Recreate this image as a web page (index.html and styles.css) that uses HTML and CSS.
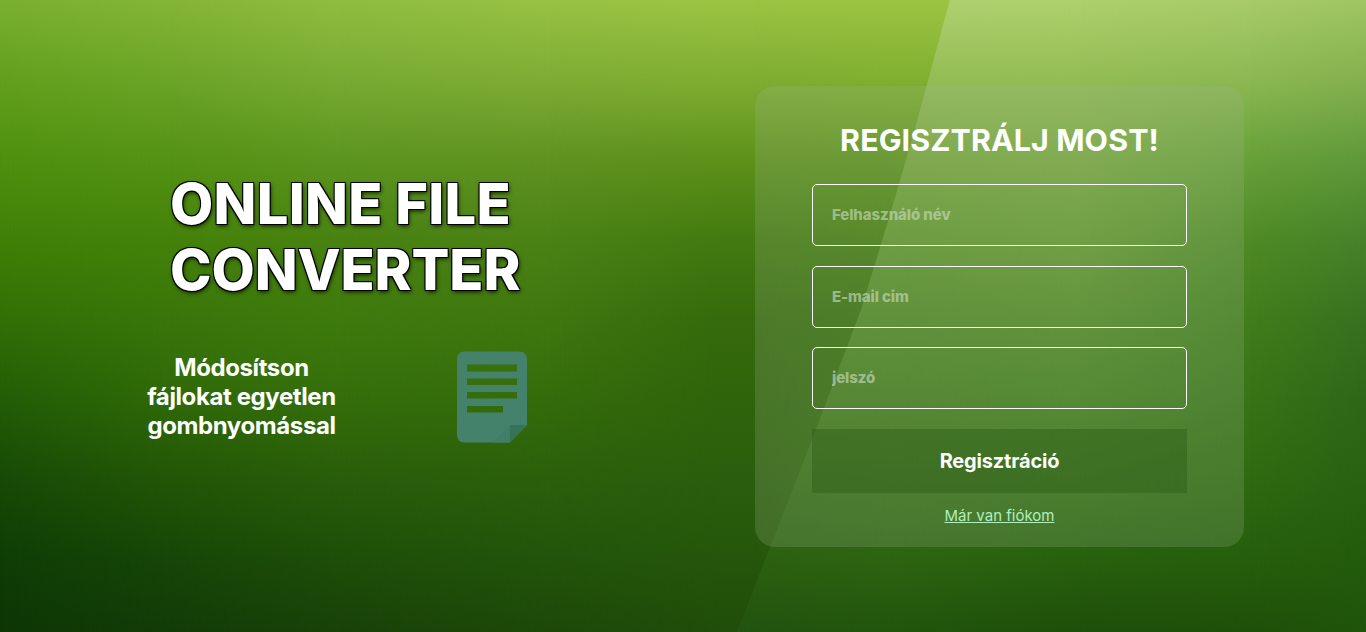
FILE: index.html
```
<!DOCTYPE html>
<html lang="hu">
<head>
<meta charset="utf-8">
<title>Online File Converter</title>
<link rel="stylesheet" href="styles.css">
</head>
<body>
<div class="backdrop" aria-hidden="true">
  <div class="shade shade-a"></div>
  <div class="shade shade-b"></div>
  <div class="shade shade-c"></div>
  <div class="shade shade-d"></div>
  <div class="shade shade-e"></div>
  <div class="beam">
    <div class="shade beam-a"></div>
    <div class="shade beam-b"></div>
    <div class="shade beam-c"></div>
    <div class="shade beam-d"></div>
    <div class="shade beam-e"></div>
  </div>
</div>
<main class="page">
  <section class="intro">
    <h1 class="title"><span class="title-top">ONLINE FILE</span><br>CONVERTER</h1>
    <div class="pitch">
      <p class="slogan">Módosítson<br>fájlokat egyetlen<br>gombnyomással</p>
      <svg class="doc" viewBox="0 0 70 92" width="70" height="92">
        <path fill="#44826c" fill-rule="evenodd" d="M8 .5H62Q70 .5 70 8.500V74L53 91.500H8Q0 91.500 0 83.500V8.500Q0 .5 8 .5ZM10 13.500V20.500H60V13.500ZM10 27.500V34H60V27.500ZM10 41V47.500H60V41ZM10 55V61.500H46V55Z"/>
        <path fill="#417e68" d="M53 74V91.500H36Z"/>
        <path fill="#36735b" d="M53 74H70L53 91.500Z"/>
      </svg>
    </div>
  </section>
  <form class="card">
    <h2 class="card-title">REGISZTRÁLJ MOST!</h2>
    <input class="field" type="text" placeholder="Felhasználó név">
    <input class="field" type="text" placeholder="E-mail cim">
    <input class="field" type="password" placeholder="jelszó">
    <button class="submit" type="button">Regisztráció</button>
    <a class="login" href="#">Már van fiókom</a>
  </form>
</main>
</body>
</html>
```
FILE: styles.css
```
* { box-sizing: border-box; }
body {
  margin: 0;
  height: 632px;
  overflow: hidden;
  background: #2d630b;
  color: #fff;
  font-family: Inter, sans-serif;
}
.backdrop { position: absolute; inset: 0; z-index: -1;
  background: linear-gradient(#7ab02f, #62a01d 80px, #4f900f 160px, #408007 240px, #317006 320px, #235d06 400px, #174a06 480px, #0f3d05 560px, #0d3605 632px); }
.shade { position: absolute; inset: 0; }
/* Each shade fades in sideways over the one before it. */
.shade-a { background: linear-gradient(#84b536, #6ba427 80px, #549214 160px, #438209 240px, #39750a 320px, #2f6908 400px, #225606 480px, #174607 560px, #123c07 632px);
  mask-image: linear-gradient(90deg, transparent 0, #000 170px); }
.shade-b { background: linear-gradient(#8fbd40, #77aa32 80px, #5c951e 160px, #488211 240px, #3e7a0d 320px, #346e0b 400px, #295d0a 480px, #1e4e08 560px, #184208 632px);
  mask-image: linear-gradient(90deg, transparent 170px, #000 340px); }
.shade-c { background: linear-gradient(#98c243, #7dac34 80px, #5f9221 160px, #4b8216 240px, #3f770f 320px, #346c0b 400px, #2b600b 480px, #23540b 560px, #1d4908 632px);
  mask-image: linear-gradient(90deg, transparent 340px, #000 550px); }
.shade-d { background: linear-gradient(#9bc443, #7fad31 80px, #5d911a 160px, #437a10 240px, #366a0c 320px, #30640b 400px, #2b5e0c 480px, #25560b 560px, #204e0a 632px);
  mask-image: linear-gradient(90deg, transparent 550px, #000 720px); }
.shade-e { background: linear-gradient(#9cc443, #80af2f 80px, #5d921c 160px, #447c0c 240px, #37700b 320px, #30670a 632px);
  mask-image: linear-gradient(90deg, transparent 755px, #000 900px); }
.beam { position: absolute; inset: 0;
  clip-path: polygon(950px 0, 1366px 0, 1366px 632px, 737px 632px, 812px 440px, 861px 310px, 888px 222px, 912px 140px); }
.beam-a { background: linear-gradient(#b0d170, #5b9230 240px, #427b1a 400px, #356c14 480px, #2c6011 560px, #235310 632px); }
.beam-b { background: linear-gradient(#b0d170, #94bd54 80px, #77a63a 160px, #60962c 240px, #4f8722 320px, #437b1b 400px, #386f15 480px, #2d6411 560px, #21550c 632px);
  mask-image: linear-gradient(90deg, transparent 740px, #000 900px); }
.beam-c { background: linear-gradient(#aed06c, #93bc54 80px, #79a93f 160px, #64992f 240px, #518a24 320px, #427e19 400px, #357112 480px, #28600e 560px, #1e4f0a 632px);
  mask-image: linear-gradient(90deg, transparent 900px, #000 1080px); }
.beam-d { background: linear-gradient(#a7cb68, #8bb852 80px, #67a038 160px, #4f8a25 240px, #417d1b 320px, #377416 400px, #2f6a10 480px, #265e0c 560px, #1f500a 632px);
  mask-image: linear-gradient(90deg, transparent 1080px, #000 1250px); }
.beam-e { background: linear-gradient(#9fc563, #82b04d 80px, #5f983a 160px, #46822a 240px, #37711f 320px, #2f6718 400px, #296211 480px, #235b0c 560px, #1f540a 632px);
  mask-image: linear-gradient(90deg, transparent 1250px, #000 1366px); }
.page { display: grid; grid-template-columns: 755px 489px; height: 632px; }
.intro { padding: 170px 0 0 147px; }
.title {
  margin: 0 0 0 23px;
  font-size: 56px;
  line-height: 66px;
  font-weight: 800;
  padding-top: 1px;
  letter-spacing: -.1px;
  text-shadow: -1px -1px 0 #000, 1px -1px 0 #000, -1px 1px 0 #000, 1px 1px 0 #000, 1px 2px 4px rgba(0, 0, 0, .8);
}
.title-top { letter-spacing: .3px; }
.pitch { display: flex; gap: 121px; margin-top: 48px; }
.slogan { margin: 2px 0 0; width: 189px; white-space: nowrap; text-align: center; font-size: 24px; line-height: 29px; font-weight: 700; letter-spacing: -.4px; display: flex; justify-content: center; }
.doc { flex: none; }
.card {
  display: flex;
  flex-direction: column;
  align-items: center;
  height: 461px;
  margin-top: 86px;
  padding: 35px 57px 0;
  border-radius: 20px;
  background: rgba(160, 182, 150, .22);
}
.card-title { margin: 0 0 24px; font-size: 30.4px; line-height: 39px; font-weight: 730; letter-spacing: .1px; white-space: nowrap; }
.field {
  width: 375px;
  height: 62px;
  flex: none;
  margin-bottom: 19.6px;
  padding: 0 20px 1px 19px;
  border: 1px solid #fff;
  border-radius: 5px;
  background: transparent;
  color: #fff;
  font: 800 15px Inter, sans-serif;
  letter-spacing: -.1px;
}
.field::placeholder { color: rgba(200, 218, 190, .65); }
.submit {
  width: 375px;
  height: 64px;
  flex: none;
  border: 0;
  background: rgba(44, 94, 22, .45);
  color: #fff;
  font: 700 20px Inter, sans-serif;
  letter-spacing: -.17px;
}
.login { margin-top: 13px; color: #b0efbd; font-size: 15px; line-height: 19px; text-decoration: underline; }
```
